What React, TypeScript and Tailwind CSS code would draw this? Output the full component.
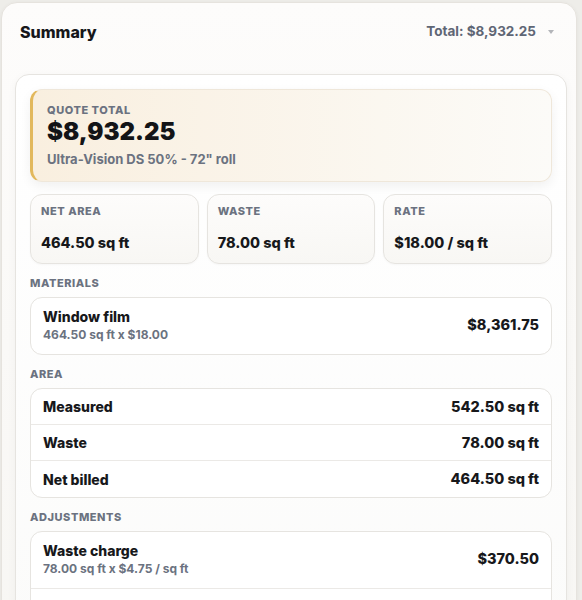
import React from "react";

const font = { fontFamily: "Inter, 'Noto Sans', sans-serif" };

const SectionLabel = ({ children }: { children: React.ReactNode }) => (
  <div className="mt-[11px] mb-[6px] text-[11px] leading-[16px] font-extrabold uppercase tracking-wider text-[#6b7280]">
    {children}
  </div>
);

const Stat = ({ label, value }: { label: string; value: string }) => (
  <div className="flex flex-col rounded-[12px] border border-[#e6e4e0] bg-gradient-to-b from-[#fdfcfb] to-[#f8f7f4] px-[10px] pt-[8px] pb-[10px] shadow-[0_1px_2px_rgba(0,0,0,0.03)]">
    <div className="text-[11px] leading-[16px] font-extrabold uppercase tracking-wider text-[#6b7280]">
      {label}
    </div>
    <div className="mt-[14px] text-[14.5px] leading-[20px] font-extrabold text-[#17181b]">
      {value}
    </div>
  </div>
);

const LineItem = ({
  title,
  sub,
  amount,
  last,
}: {
  title: string;
  sub: string;
  amount: string;
  last?: boolean;
}) => (
  <div
    className={
      "flex items-center justify-between px-[12px] pt-[9px] pb-[11px] " +
      (last ? "" : "border-b border-[#ebe9e6]")
    }
  >
    <div className="flex flex-col">
      <span className="text-[14px] leading-[19px] font-extrabold text-[#17181b]">{title}</span>
      <span className="text-[12px] leading-[17px] font-bold text-[#6b7280]">{sub}</span>
    </div>
    <span className="text-[14.5px] leading-[20px] font-extrabold text-[#17181b]">{amount}</span>
  </div>
);

const Row = ({ label, value, last }: { label: string; value: string; last?: boolean }) => (
  <div
    className={
      "flex h-[36px] items-center justify-between px-[12px] " +
      (last ? "" : "border-b border-[#ebe9e6]")
    }
  >
    <span className="text-[14px] font-extrabold text-[#17181b]">{label}</span>
    <span className="text-[14.5px] font-extrabold text-[#17181b]">{value}</span>
  </div>
);

export default function App() {
  return (
    <div className="min-h-screen bg-[#eeede9] pl-[1px] pt-[2px]" style={font}>
      <div className="w-[576px] rounded-t-[16px] border border-[#e6e3de] bg-gradient-to-b from-[#fdfcfb] to-[#f7f6f3] shadow-[0_1px_4px_rgba(0,0,0,0.05)]">
        {/* header */}
        <div className="flex h-[57px] items-center justify-between px-[18px]">
          <h2 className="text-[16px] font-extrabold text-[#16171a]">Summary</h2>
          <div className="flex items-center gap-[12px]">
            <span className="text-[13.5px] font-bold text-[#5f6675]">Total: $8,932.25</span>
            <svg width="6" height="4" viewBox="0 0 6 4" className="mr-[4px]">
              <polygon points="0,0 6,0 3,4" fill="#b3b5b9" />
            </svg>
          </div>
        </div>

        <div className="pl-[13px] pr-[9px] pt-[14px] pb-[20px]">
          <div className="rounded-[14px] border border-[#e6e4e0] bg-gradient-to-b from-[#ffffff] to-[#fbfbfa] p-[14px] shadow-[0_2px_8px_rgba(0,0,0,0.04)]">
            {/* quote total */}
            <div className="rounded-[12px] border border-[#efe7da] border-l-[3px] border-l-[#e2b85c] bg-gradient-to-r from-[#f9efdf] to-[#fcfbf8] pl-[14px] pt-[12px] pb-[13px] shadow-[0_4px_12px_rgba(0,0,0,0.06)]">
              <div className="text-[11px] leading-[16px] font-extrabold uppercase tracking-wider text-[#6b7280]">
                Quote total
              </div>
              <div className="text-[24px] leading-[28px] font-black text-[#131417]">$8,932.25</div>
              <div className="mt-[4px] text-[13px] leading-[18px] font-bold text-[#6b7280]">
                Ultra-Vision DS 50% - 72" roll
              </div>
            </div>

            {/* stats */}
            <div className="mt-[12px] grid grid-cols-3 gap-[8px]">
              <Stat label="Net area" value="464.50 sq ft" />
              <Stat label="Waste" value="78.00 sq ft" />
              <Stat label="Rate" value="$18.00 / sq ft" />
            </div>

            <SectionLabel>Materials</SectionLabel>
            <div className="rounded-[12px] border border-[#e6e4e0] bg-white">
              <LineItem title="Window film" sub="464.50 sq ft x $18.00" amount="$8,361.75" last />
            </div>

            <SectionLabel>Area</SectionLabel>
            <div className="rounded-[12px] border border-[#e6e4e0] bg-white">
              <Row label="Measured" value="542.50 sq ft" />
              <Row label="Waste" value="78.00 sq ft" />
              <Row label="Net billed" value="464.50 sq ft" last />
            </div>

            <SectionLabel>Adjustments</SectionLabel>
            <div className="rounded-[12px] border border-[#e6e4e0] bg-white">
              <LineItem title="Waste charge" sub="78.00 sq ft x $4.75 / sq ft" amount="$370.50" />
              <div className="flex items-center justify-between px-[12px] pt-[18px] pb-[12px]">
                <div className="flex flex-col">
                  <span className="text-[14px] leading-[19px] font-extrabold text-[#17181b]">Discount</span>
                  <span className="text-[12px] leading-[17px] font-bold text-[#6b7280]">None applied</span>
                </div>
                <span className="text-[14.5px] leading-[20px] font-extrabold text-[#17181b]">$0.00</span>
              </div>
            </div>
          </div>
        </div>
      </div>
    </div>
  );
}
